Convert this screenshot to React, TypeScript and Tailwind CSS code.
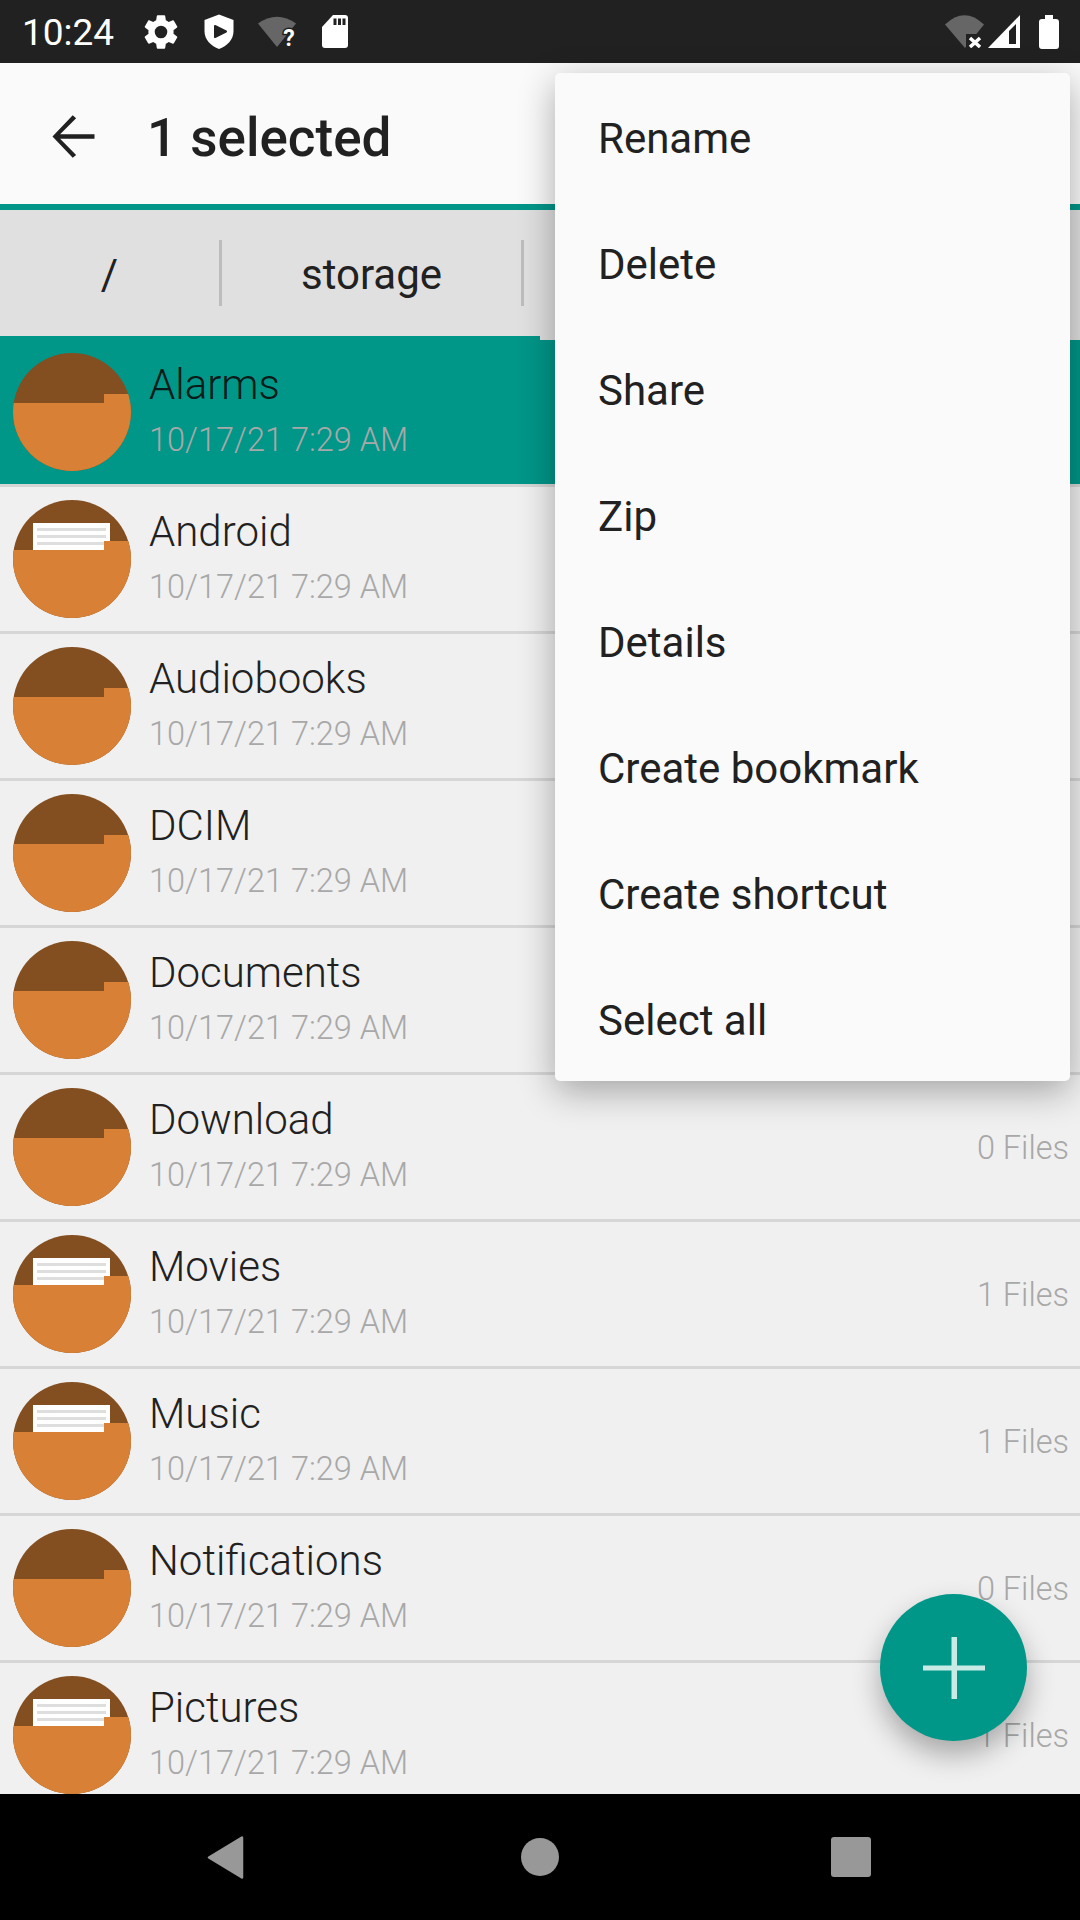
const rows = [
  { name: "Alarms", files: "0 Files", paper: false, selected: true },
  { name: "Android", files: "1 Files", paper: true },
  { name: "Audiobooks", files: "0 Files", paper: false },
  { name: "DCIM", files: "0 Files", paper: false },
  { name: "Documents", files: "0 Files", paper: false },
  { name: "Download", files: "0 Files", paper: false },
  { name: "Movies", files: "1 Files", paper: true },
  { name: "Music", files: "1 Files", paper: true },
  { name: "Notifications", files: "0 Files", paper: false },
  { name: "Pictures", files: "1 Files", paper: true },
];

const menu = ["Rename", "Delete", "Share", "Zip", "Details", "Create bookmark", "Create shortcut", "Select all"];

function FolderIcon({ paper }: { paper: boolean }) {
  return (
    <svg width="118" height="118" viewBox="0 0 118 118" className="shrink-0">
      <defs>
        <clipPath id="fc">
          <circle cx="59" cy="59" r="59" />
        </clipPath>
      </defs>
      <g clipPath="url(#fc)">
        <rect width="118" height="118" fill="#834e20" />
        {paper && (
          <g>
            <rect x="20" y="23" width="77" height="28" fill="#ffffff" />
            <rect x="24" y="28" width="69" height="3" fill="#dedede" />
            <rect x="24" y="35" width="69" height="3" fill="#dedede" />
            <rect x="24" y="42" width="69" height="3" fill="#dedede" />
          </g>
        )}
        <path d="M0 50H91V41H118V118H0Z" fill="#d88136" />
      </g>
    </svg>
  );
}

function Row({ name, files, paper, selected }: { name: string; files: string; paper: boolean; selected?: boolean }) {
  return (
    <div className={`flex h-[147px] shrink-0 items-center border-b-[3px] border-[#d6d6d6] pl-[13px] pr-[11px] ${selected ? "bg-[#009688]" : "bg-[#f0f0f0]"}`}>
      <FolderIcon paper={paper} />
      <div className="ml-[18px] flex min-w-0 flex-1 flex-col">
        <div className={`mt-[1px] h-[54px] text-[42px] font-light leading-[54px] ${selected ? "text-[#0a1a18]" : "text-[#212121]"}`}>{name}</div>
        <div className="mt-[1px] h-[54px] text-[32.5px] font-light leading-[54px] text-[#a8a8a8]">10/17/21 7:29 AM</div>
      </div>
      <div className="mt-[2px] text-[32.5px] font-light text-[#a8a8a8]">{files}</div>
    </div>
  );
}

export default function App() {
  return (
    <div className="relative flex h-[1920px] w-[1080px] flex-col overflow-hidden bg-[#f0f0f0] font-['Roboto',sans-serif]">
      {/* status bar */}
      <div className="flex h-[63px] shrink-0 items-center bg-[#212121] pr-[21px] text-white">
        <span className="ml-[22px] mt-[1px] w-[108px] text-[37px] leading-none">10:24</span>
        <svg width="42" height="42" viewBox="0 0 24 24" fill="#fff" className="ml-[10px]">
          <path d="M19.14 12.94c.04-.3.06-.61.06-.94 0-.32-.02-.64-.07-.94l2.03-1.58a.49.49 0 0 0 .12-.61l-1.92-3.32a.488.488 0 0 0-.59-.22l-2.39.96c-.5-.38-1.03-.7-1.62-.94l-.36-2.54a.484.484 0 0 0-.48-.41h-3.84c-.24 0-.43.17-.47.41l-.36 2.54c-.59.24-1.13.57-1.62.94l-2.39-.96c-.22-.08-.47 0-.59.22L2.74 8.87c-.12.21-.08.47.12.61l2.03 1.58c-.05.3-.09.63-.09.94s.02.64.07.94l-2.03 1.58a.49.49 0 0 0-.12.61l1.92 3.32c.12.22.37.29.59.22l2.39-.96c.5.38 1.03.7 1.62.94l.36 2.54c.05.24.24.41.48.41h3.84c.24 0 .44-.17.47-.41l.36-2.54c.59-.24 1.13-.56 1.62-.94l2.39.96c.22.08.47 0 .59-.22l1.92-3.32c.12-.22.07-.47-.12-.61l-2.01-1.58zM12 15.6A3.6 3.6 0 1 1 12 8.4a3.6 3.6 0 0 1 0 7.2z" />
        </svg>
        <svg width="30" height="35" viewBox="0 0 30 35" className="ml-[22px]">
          <path d="M15 0.5L29.500 6V17C29.500 26 23 32 15 35C7 32 0.500 26 0.500 17V6Z" fill="#fff" />
          <path d="M11 12L22 17.500L11 23Z" fill="#212121" stroke="#212121" strokeWidth="2" strokeLinejoin="round" />
        </svg>
        <svg width="40" height="32" viewBox="0 0 40 32" className="ml-[24px] mt-[1px]">
          <path d="M19 31L0 7.500Q19 -6 38 7.500Z" fill="#666666" />
          <text x="31" y="30" fontSize="23" fontWeight="700" fill="#fff" stroke="#212121" strokeWidth="3" paintOrder="stroke" textAnchor="middle">?</text>
        </svg>
        <svg width="26" height="33" viewBox="0 0 26 33" className="ml-[24px]">
          <path d="M11 0H23A3 3 0 0 1 26 3V30A3 3 0 0 1 23 33H3A3 3 0 0 1 0 30V12Z" fill="#fff" />
          <rect x="11.500" y="3.500" width="3" height="6.500" fill="#212121" />
          <rect x="16" y="3.500" width="3" height="6.500" fill="#212121" />
          <rect x="20.500" y="3.500" width="3" height="6.500" fill="#212121" />
        </svg>
        <svg width="39" height="33" viewBox="0 0 39 33" className="ml-auto">
          <path d="M20 33L0 9.500Q19.500 -9 39 9.500Z" fill="#666666" />
          <rect x="21" y="19" width="18" height="14" fill="#212121" />
          <path d="M25 23L35 32M35 23L25 32" stroke="#fff" strokeWidth="3.500" />
        </svg>
        <svg width="32" height="33" viewBox="0 0 32 33" className="ml-[4px]">
          <path d="M0 33L32 0V33Z" fill="#fff" />
          <path d="M28 9V29H21V16Z" fill="#212121" />
        </svg>
        <svg width="20" height="34" viewBox="0 0 20 34" className="ml-[19px]">
          <path d="M6 0H14V4H17A3 3 0 0 1 20 7V31A3 3 0 0 1 17 34H3A3 3 0 0 1 0 31V7A3 3 0 0 1 3 4H6Z" fill="#fff" />
        </svg>
      </div>
      {/* toolbar */}
      <div className="flex h-[141px] shrink-0 items-center bg-[#fafafa]">
        <svg width="63" height="63" viewBox="0 0 24 24" fill="#212121" className="ml-[42px] mt-[6px]">
          <path d="M20 11.100H6.900l6.100-6.100L11.700 3.900 4 12l7.700 8.100 1.300-1.100-6.100-6.100H20z" />
        </svg>
        <span className="ml-[42px] mt-[10px] text-[53px] font-medium text-[#212121]">1 selected</span>
      </div>
      <div className="h-[6px] shrink-0 bg-[#009688]" />
      {/* breadcrumb */}
      <div className="relative flex h-[130px] shrink-0 items-start bg-[#e0e0e0] text-[42px] text-[#212121]">
        <div className="mt-[30px] flex h-[66px] w-[222px] items-center justify-center border-r-[3px] border-[#bdbdbd] pt-[2px]">/</div>
        <div className="mt-[30px] flex h-[66px] w-[302px] items-center justify-center border-r-[3px] border-[#bdbdbd] pt-[2px]">storage</div>
        <div className="absolute bottom-0 left-0 h-[4px] w-[540px] bg-[#009688]" />
      </div>
      {/* list */}
      <div className="flex min-h-0 flex-1 flex-col overflow-hidden">
        {rows.map((r) => (
          <Row key={r.name} {...r} />
        ))}
      </div>
      {/* nav bar */}
      <div className="flex h-[126px] shrink-0 items-center bg-black">
        <svg width="37" height="43" viewBox="0 0 37 43" className="ml-[207px]">
          <path d="M35 1.500V41.500L2 21.500Z" fill="#989898" stroke="#989898" strokeWidth="2.500" strokeLinejoin="round" />
        </svg>
        <div className="ml-[277px] h-[38px] w-[38px] rounded-full bg-[#989898]" />
        <div className="ml-[272px] h-[40px] w-[40px] rounded-[3px] bg-[#989898]" />
      </div>
      {/* menu */}
      <div className="absolute left-[555px] top-[73px] flex w-[515px] flex-col rounded-[5px] bg-[#fafafa] shadow-[0_10px_36px_rgba(0,0,0,0.32)]">
        {menu.map((m) => (
          <div key={m} className="flex h-[126px] items-center pl-[43px] pt-[4px] text-[42px] text-[#212121]">{m}</div>
        ))}
      </div>
      {/* fab */}
      <div className="absolute left-[880px] top-[1594px] flex h-[147px] w-[147px] items-center justify-center rounded-full bg-[#009688] shadow-[0_14px_28px_rgba(0,0,0,0.3)]">
        <svg width="62" height="62" viewBox="0 0 62 62" fill="#c8ebe5">
          <path d="M28.500 0h5.500v28.500H62v5H34V62h-5.500V33.500H0v-5h28.500z" />
        </svg>
      </div>
    </div>
  );
}
